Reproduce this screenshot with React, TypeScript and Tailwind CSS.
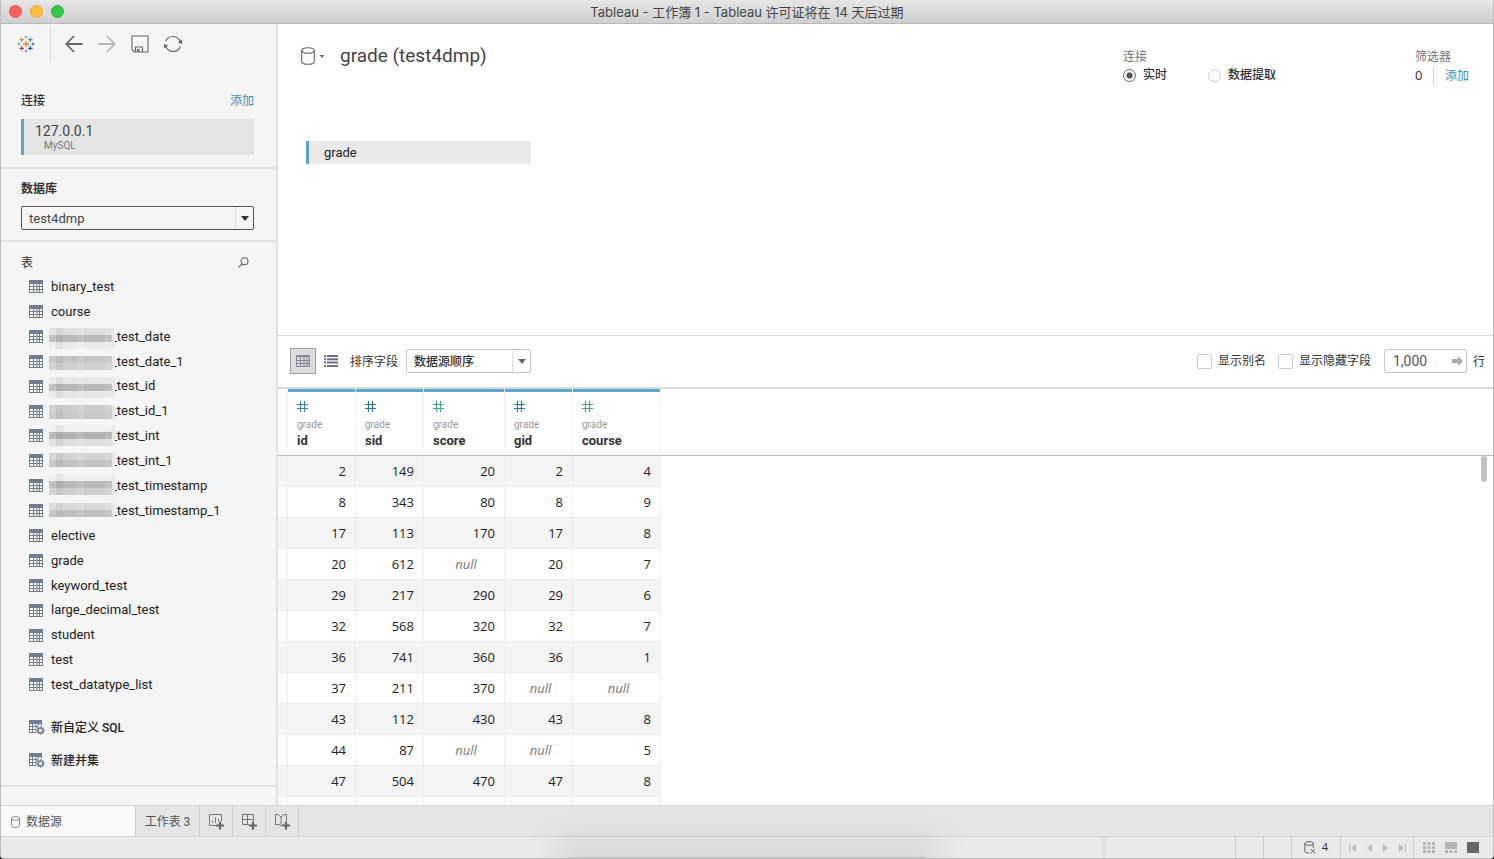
import { useState } from 'react'
import type { ReactNode } from 'react'

type TableEntry = {
  name: string
  // masked schema prefix: first strip offset and the strip shades
  mask?: { top: number; rows: string[] }
}

const tables: TableEntry[] = [
  { name: 'binary_test' },
  { name: 'course' },
  { name: '_test_date', mask: { top: 4, rows: ['#dedede', '#b9b9b9', '#ebebeb'] } },
  { name: '_test_date_1', mask: { top: 7, rows: ['#c3c3c3', '#d0d0d0'] } },
  { name: '_test_id', mask: { top: 3, rows: ['#e6e6e6', '#b8b8b8', '#e6e6e6'] } },
  { name: '_test_id_1', mask: { top: 6, rows: ['#cbcbcb', '#c8c8c8'] } },
  { name: '_test_int', mask: { top: 2, rows: ['#f0f0f0', '#b2b2b2', '#dedede'] } },
  { name: '_test_int_1', mask: { top: 5, rows: ['#d3d3d3', '#c1c1c1'] } },
  { name: '_test_timestamp', mask: { top: 1, rows: ['#f0f0f0', '#b9b9b9', '#cecece'] } },
  { name: '_test_timestamp_1', mask: { top: 5, rows: ['#d9d9d9', '#c0c0c0'] } },
  { name: 'elective' },
  { name: 'grade' },
  { name: 'keyword_test' },
  { name: 'large_decimal_test' },
  { name: 'student' },
  { name: 'test' },
  { name: 'test_datatype_list' },
]

const columns = [
  { name: 'id', color: 'text-[#3f82a6]' },
  { name: 'sid', color: 'text-[#2f769c]' },
  { name: 'score', color: 'text-[#4aa585]' },
  { name: 'gid', color: 'text-[#2f769c]' },
  { name: 'course', color: 'text-[#4aa585]' },
]

const rows: (number | null)[][] = [
  [2, 149, 20, 2, 4],
  [8, 343, 80, 8, 9],
  [17, 113, 170, 17, 8],
  [20, 612, null, 20, 7],
  [29, 217, 290, 29, 6],
  [32, 568, 320, 32, 7],
  [36, 741, 360, 36, 1],
  [37, 211, 370, null, null],
  [43, 112, 430, 43, 8],
  [44, 87, null, null, 5],
  [47, 504, 470, 47, 8],
]

function TableauLogo() {
  const cross = (x: number, y: number, r: number, color: string, w: number) => (
    <path d={`M${x - r} ${y}h${2 * r}M${x} ${y - r}v${2 * r}`} stroke={color} strokeWidth={w} />
  )
  return (
    <svg width="18" height="18" viewBox="0 0 18 18" fill="none">
      {cross(9, 9, 3, '#eb7a2f', 1.3)}
      {cross(4.7, 4.7, 2.3, '#eb912c', 1.2)}
      {cross(13.3, 4.7, 2.3, '#5a8fa3', 1.2)}
      {cross(4.7, 13.3, 2.3, '#d0323f', 1.2)}
      {cross(13.3, 13.3, 2.3, '#2c5696', 1.2)}
      {cross(9, 2, 1.5, '#7b9bb5', 0.9)}
      {cross(9, 16, 1.5, '#7b87ad', 0.9)}
      {cross(2, 9, 1.5, '#5a9bb5', 0.9)}
      {cross(16, 9, 1.5, '#3a4a88', 0.9)}
    </svg>
  )
}

function ArrowIcon({ flip }: { flip?: boolean }) {
  return (
    <svg width="18" height="18" viewBox="0 0 18 18" fill="none" stroke="currentColor" strokeWidth="1.8" className={flip ? 'rotate-180' : ''}>
      <path d="M17.5 9H1.5M9 1L1.3 9 9 17" />
    </svg>
  )
}

function SaveIcon() {
  return (
    <svg width="18" height="18" viewBox="0 0 18 18" fill="none" stroke="currentColor" strokeWidth="1.1">
      <path d="M1 1h16v16H3.5L1 14.5zM4.5 17v-5h7v5" />
      <path d="M6 14h2.5v2.5H6z" fill="currentColor" stroke="none" />
    </svg>
  )
}

function RefreshIcon() {
  return (
    <svg width="18" height="18" viewBox="0 0 18 18" fill="none" stroke="currentColor" strokeWidth="1.1">
      <path d="M1.6 6.5A7.8 7.8 0 0 1 16 6.2M16.4 11.5A7.8 7.8 0 0 1 2 11.8" />
      <path d="M13.8 7.6L18 8.9V4.4zM4.2 10.4L0 9.1v4.5z" fill="currentColor" stroke="none" />
    </svg>
  )
}

function GridIcon() {
  return (
    <svg width="14" height="13" viewBox="0 0 14 13" fill="none" className="shrink-0">
      <path d="M0 0h14v13H0z" fill="#6f7e92" />
      <path d="M1 4h3v2H1zM5 4h2.500v2H5zM8.500 4H10v2H8.500zM11 4h2v2h-2zM1 7h3v2H1zM5 7h2.500v2H5zM8.500 7H10v2H8.500zM11 7h2v2h-2zM1 10h3v2H1zM5 10h2.500v2H5zM8.500 10H10v2H8.500zM11 10h2v2h-2z" fill="#fafafa" />
    </svg>
  )
}

function GridGearIcon() {
  return (
    <svg width="16" height="15" viewBox="0 0 16 15" fill="none" className="shrink-0">
      <path d="M0 0h13v6H9v7H0z" fill="#6f7e92" />
      <path d="M1 4h2v2H1zM4 4h2.500v2H4zM7.500 4H9v2H7.500zM10 4h2v2h-2zM1 7h2v2H1zM4 7h2.500v2H4zM1 10h2v2H1zM4 10h2.500v2H4z" fill="#fafafa" />
      <circle cx="11.500" cy="10.500" r="4.500" fill="#f5f5f5" />
      <circle cx="11.500" cy="10.500" r="2.500" stroke="#6f7e92" strokeWidth="1.600" />
      <path d="M11.500 6.300v1.500M11.500 13.200v1.500M7.300 10.500h1.500M14.200 10.500h1.500M8.500 7.500l1 1M13.500 12.500l1 1M14.500 7.500l-1 1M9.500 12.500l-1 1" stroke="#6f7e92" strokeWidth="1.400" />
    </svg>
  )
}

function HashIcon() {
  return (
    <svg width="11" height="11" viewBox="0 0 11 11" fill="none" stroke="currentColor" strokeWidth="1.2">
      <path d="M3.500 0v11M7.500 0v11M0 3.500h11M0 7.500h11" />
    </svg>
  )
}

function CylinderIcon({ className }: { className: string }) {
  return (
    <svg viewBox="0 0 14 18" fill="none" stroke="currentColor" strokeWidth="1.1" className={className}>
      <ellipse cx="7" cy="3.500" rx="6.300" ry="2.800" />
      <path d="M.7 3.500v11c0 1.600 2.800 2.800 6.300 2.800s6.300-1.200 6.300-2.800v-11" />
    </svg>
  )
}

function Mask({ top, rows }: { top: number; rows: string[] }) {
  return (
    <svg width="66" height="25" viewBox="0 0 66 25" shapeRendering="crispEdges" aria-hidden="true" className="relative shrink-0">
      {rows.map((fill, r) => (
        <g key={r}>
          <rect y={top + r * 7} width="63" height="7" fill={fill} />
          <rect x="63" y={top + r * 7} width="3" height="7" fill="#e9e9e9" />
          {[0, 1, 4, 8].map((c) => (
            <rect
              key={c}
              x={c * 7}
              y={top + r * 7}
              width="7"
              height="7"
              fill={c === 1 ? '#000' : '#fff'}
              opacity={c === 1 ? 0.04 : 0.12}
            />
          ))}
        </g>
      ))}
    </svg>
  )
}

function Caret({ className }: { className: string }) {
  return (
    <svg viewBox="0 0 8 5" fill="currentColor" className={className}>
      <path d="M0 0h8L4 5z" />
    </svg>
  )
}

function IconButton({ label, children, className = 'text-[#666]' }: { label: string; children: ReactNode; className?: string }) {
  return (
    <button type="button" aria-label={label} className={`flex items-center justify-center ${className}`}>
      {children}
    </button>
  )
}

function TitleBar() {
  return (
    <header className="grid h-6 shrink-0 grid-cols-[1fr_auto_1fr] items-center border-b border-[#b8b8b8] bg-linear-to-b from-[#e6e6e6] to-[#cfcfcf]">
      <div className="flex gap-2 pl-2">
        <button type="button" aria-label="关闭" className="size-[13px] rounded-full border border-[#ee544e] bg-[#fc605c]" />
        <button type="button" aria-label="最小化" className="size-[13px] rounded-full border border-[#e5a935] bg-[#fdbc40]" />
        <button type="button" aria-label="缩放" className="size-[13px] rounded-full border border-[#2bb13c] bg-[#34c84a]" />
      </div>
      <h1 className="pt-px font-[Inter,'Noto_Sans_CJK_SC',sans-serif] text-[13px] leading-5 text-[#444]">
        Tableau - 工作簿 1 - Tableau 许可证将在 14 天后过期
      </h1>
    </header>
  )
}

function Sidebar() {
  return (
    <aside className="flex w-[277px] shrink-0 flex-col overflow-hidden border-r-2 border-[#e0e0e0] bg-[#f5f5f5]">
      <div className="flex h-10 shrink-0 items-center pl-4">
        <TableauLogo />
        <span className="mr-[14px] ml-[15px] h-9 w-px bg-[#d9d9d9]" />
        <div className="flex gap-[15px]">
          <IconButton label="后退"><ArrowIcon /></IconButton>
          <IconButton label="前进" className="text-[#b5b5b5]"><ArrowIcon flip /></IconButton>
          <IconButton label="保存"><SaveIcon /></IconButton>
          <IconButton label="刷新"><RefreshIcon /></IconButton>
        </div>
      </div>

      <section className="border-b-2 border-[#e1e1e1] px-5 pt-[27px] pb-3">
        <div className="flex h-5 items-center justify-between text-xs">
          <h2 className="font-medium text-[#333]">连接</h2>
          <a href="#add" className="mr-[2px] text-[#3d8fb1]">添加</a>
        </div>
        <div className="mt-2 mr-[2px] flex h-9 flex-col border-l-[3px] border-[#5ea6c9] bg-[#e5e5e5] pt-[3px] pl-[11px]">
          <span className="text-sm leading-[18px] text-[#444]">127.0.0.1</span>
          <span className="pl-[9px] text-[10px] leading-3 text-[#777]">MySQL</span>
        </div>
      </section>

      <section className="border-b-2 border-[#e1e1e1] px-5 pt-[10px] pb-[10px]">
        <label htmlFor="database" className="block text-xs leading-5 font-bold text-[#333]">数据库</label>
        <div className="relative mt-[7px] mr-[2px]">
          <select id="database" className="h-6 w-full appearance-none rounded-xs border border-[#555] bg-[#f5f5f5] pt-px pl-[7px] text-[13px] text-[#444]">
            <option>test4dmp</option>
          </select>
          <span className="pointer-events-none absolute inset-y-px right-px flex w-[18px] items-center justify-center border-l border-[#ddd] text-[#333]">
            <Caret className="h-[5px] w-2" />
          </span>
        </div>
      </section>

      <section className="border-b-2 border-[#e1e1e1] pt-[10px] pb-2">
        <div className="flex h-5 items-center justify-between pr-[27px] pl-5">
          <h2 className="pt-px text-xs text-[#333]">表</h2>
          <IconButton label="搜索">
            <svg width="11" height="11" viewBox="0 0 11 11" fill="none" stroke="currentColor" strokeWidth="1.1">
              <circle cx="6.500" cy="4.300" r="3.500" />
              <path d="M4 7L.5 10.500" />
            </svg>
          </IconButton>
        </div>
        <ul className="mt-[2px] grid h-[423px] auto-rows-fr">
          {tables.map((t) => (
            <li key={t.name} className="flex min-h-0 items-center pl-7 text-[13px] text-[#222]">
              <GridIcon />
              {t.mask ? (
                <span className="ml-[6px] flex items-center">
                  <Mask {...t.mask} />
                  <span className="-ml-1">{t.name}</span>
                </span>
              ) : (
                <span className="ml-2">{t.name}</span>
              )}
            </li>
          ))}
        </ul>
        <div className="mt-[14px] flex flex-col pl-7 text-xs font-medium text-[#222]">
          <button type="button" className="flex h-[33px] items-center gap-[6px]">
            <GridGearIcon />新自定义 SQL
          </button>
          <button type="button" className="flex h-[33px] items-center gap-[6px]">
            <GridGearIcon />新建并集
          </button>
        </div>
      </section>
    </aside>
  )
}

function Canvas() {
  const [mode, setMode] = useState('live')

  return (
    <section className="h-[312px] shrink-0 border-b border-[#d9d9d9]">
      <div className="flex h-[62px] items-start justify-between pt-[18px] pr-6 pl-[23px]">
        <div className="flex items-center text-[#555]">
          <IconButton label="数据源">
            <CylinderIcon className="h-[18px] w-[14px]" />
            <Caret className="ml-1 h-[3px] w-[6px]" />
          </IconButton>
          <h2 className="ml-[15px] text-[19px] leading-7 text-[#444]">grade (test4dmp)</h2>
        </div>
        <div className="flex pt-[6px] text-xs text-[#333]">
          <fieldset className="mr-[139px]">
            <legend className="float-left w-full leading-[18px] text-[#777]">连接</legend>
            <div className="clear-both flex gap-[41px]">
              {[
                { id: 'live', label: '实时' },
                { id: 'extract', label: '数据提取' },
              ].map((o) => (
                <label key={o.id} className="flex items-center gap-[7px] leading-[18px] font-medium">
                  <input
                    type="radio"
                    name="mode"
                    checked={mode === o.id}
                    onChange={() => setMode(o.id)}
                    className="size-[13px] appearance-none rounded-full border border-[#ccc] bg-white checked:border-[#666] checked:bg-[radial-gradient(#555_35%,#fff_45%)]"
                  />
                  {o.label}
                </label>
              ))}
            </div>
          </fieldset>
          <div>
            <h3 className="leading-[18px] text-[#777]">筛选器</h3>
            <div className="flex h-5 items-center">
              <span className="w-[18px] font-['Open_Sans',sans-serif] text-[13px]">0</span>
              <span className="mr-[11px] h-[18px] w-px bg-[#d4d4d4]" />
              <a href="#filter" className="text-[#3d8fb1]">添加</a>
            </div>
          </div>
        </div>
      </div>
      <div className="mt-[55px] ml-7 flex h-[23px] w-[225px] items-center border-l-[3px] border-[#5ea6c9] bg-[#eaeaea] pt-px pl-[15px] text-[13px] text-[#222]">
        grade
      </div>
    </section>
  )
}

function GridToolbar() {
  return (
    <div className="flex h-[53px] shrink-0 items-center border-b-2 border-[#dadada] px-2 pb-px text-xs text-[#333]">
      <button type="button" aria-label="网格" className="ml-1 flex size-[26px] items-center justify-center border border-[#a0a0a0] bg-[#dcdcdc]">
        <svg width="14" height="12" viewBox="0 0 14 12" fill="none" stroke="#7c879b">
          <path d="M.5.5h13v11H.5zM0 1.500h14M0 5.500h14M0 8.500h14M4.500 1v11M8 1v11M11 1v11" />
        </svg>
      </button>
      <button type="button" aria-label="列表" className="ml-2 flex items-center">
        <svg width="14" height="12" viewBox="0 0 14 12" fill="#66738a">
          <path d="M0 0h2v2H0zM3 0h11v2H3zM0 3.300h2v2H0zM3 3.300h11v2H3zM0 6.600h2v2H0zM3 6.600h11v2H3zM0 10h2v2H0zM3 10h11v2H3z" />
        </svg>
      </button>
      <label htmlFor="sort" className="ml-3 pt-px">排序字段</label>
      <div className="relative ml-2">
        <select id="sort" className="h-6 w-[125px] appearance-none rounded-xs border border-[#c8c8c8] bg-white pt-px pl-[7px] font-medium">
          <option>数据源顺序</option>
        </select>
        <span className="pointer-events-none absolute inset-y-px right-px flex w-[18px] items-center justify-center border-l border-[#ddd] text-[#666]">
          <Caret className="h-[5px] w-2" />
        </span>
      </div>
      <div className="ml-auto flex items-center">
        <label className="mr-3 flex items-center gap-[6px]">
          <input type="checkbox" className="size-[15px] appearance-none rounded-xs border border-[#ccc] bg-white" />
          显示别名
        </label>
        <label className="mr-[13px] flex items-center gap-[6px]">
          <input type="checkbox" className="size-[15px] appearance-none rounded-xs border border-[#ccc] bg-white" />
          显示隐藏字段
        </label>
        <div className="relative mr-[6px]">
          <input
            id="limit"
            type="text"
            defaultValue="1,000"
            className="block h-6 w-[83px] rounded-xs border border-[#c8c8c8] pl-2 text-sm text-[#555]"
          />
          <svg width="11" height="10" viewBox="0 0 11 10" fill="#aaa" className="absolute top-[7px] right-1">
            <path d="M0 3h6V0l5 5-5 5V7H0z" />
          </svg>
        </div>
        <label htmlFor="limit" className="pt-px">行</label>
      </div>
    </div>
  )
}

function DataGrid() {
  return (
    <div className="relative min-h-0 flex-1 overflow-hidden">
      <table className="w-full table-fixed border-separate border-spacing-0">
        <colgroup>
          <col className="w-[10px]" />
          <col className="w-[68px]" />
          <col className="w-[68px]" />
          <col className="w-[81px]" />
          <col className="w-[68px]" />
          <col className="w-[88px]" />
          <col />
        </colgroup>
        <thead>
          <tr>
            <td className="border-r border-b border-r-[#eee] border-b-[#bbb]" />
            {columns.map((c) => (
              <th key={c.name} scope="col" className="h-[67px] border-r border-b border-r-[#eee] border-b-[#bbb] p-0 text-left align-top font-normal">
                <div className="h-[3px] bg-[#5ea6c9]" />
                <div className={`px-[9px] pt-[9px] ${c.color}`}>
                  <HashIcon />
                </div>
                <div className="px-[9px] pt-[6px] text-[10px] leading-[14px] text-[#999]">grade</div>
                <div className="px-[9px] text-[13px] leading-[18px] font-bold text-[#333]">{c.name}</div>
              </th>
            ))}
            <td className="border-b border-b-[#bbb]" />
          </tr>
        </thead>
        <tbody className="font-['Open_Sans',sans-serif] text-[13px] text-[#222]">
          {rows.map((row, i) => (
            <tr key={i} className="group">
              <td className="h-[31px] border-r border-b border-[#eee] group-odd:bg-[#f4f4f4]" />
              {row.map((v, j) => (
                <td
                  key={j}
                  className={`border-r border-b border-[#eee] pt-[2px] pb-0 group-odd:bg-[#f4f4f4] ${
                    v === null ? 'pr-1 pl-2 text-center text-[#777] italic' : 'px-[9px] text-right'
                  }`}
                >
                  {v === null ? 'null' : v}
                </td>
              ))}
              <td />
            </tr>
          ))}
          <tr>
            <td className="h-[31px] border-r border-[#eee]" />
            {columns.map((c) => (
              <td key={c.name} className="border-r border-[#eee]" />
            ))}
            <td />
          </tr>
        </tbody>
      </table>
      <div className="absolute top-[67px] right-[6px] h-[26px] w-[6px] rounded-full bg-[#c1c1c1]" />
    </div>
  )
}

function Plus() {
  return <path d="M12 8.500v8M8 12.500h8" stroke="#666" strokeWidth="2.200" />
}

function SheetTabs() {
  return (
    <nav className="flex h-[31px] shrink-0 items-stretch border-t border-[#d4d4d4] bg-[#e5e5e5] text-xs text-[#555]">
      <button type="button" className="flex w-[135px] items-center gap-[6px] border-r border-[#cfcfcf] bg-[#fafafa] pt-px pl-[10px]">
        <CylinderIcon className="h-3 w-[9px]" />
        数据源
      </button>
      <button type="button" className="w-16 border-r border-[#cfcfcf] pt-px">工作表 3</button>
      <button type="button" aria-label="新建工作表" className="flex w-[33px] items-center justify-center border-r border-[#cfcfcf]">
        <svg width="17" height="17" viewBox="0 0 17 17" fill="none" stroke="#777">
          <path d="M8 12.500H1.500v-11h12V8M4.500 10V7.500M7.500 10V4.500M10.500 8V5.500" />
          <Plus />
        </svg>
      </button>
      <button type="button" aria-label="新建仪表板" className="flex w-[33px] items-center justify-center border-r border-[#cfcfcf]">
        <svg width="17" height="17" viewBox="0 0 17 17" fill="none" stroke="#777">
          <path d="M8 11.500H1.500v-10h11V8M6.500 1.500v10M1.500 6.500h11" />
          <Plus />
        </svg>
      </button>
      <button type="button" aria-label="新建故事" className="flex w-[33px] items-center justify-center border-r border-[#cfcfcf]">
        <svg width="17" height="17" viewBox="0 0 17 17" fill="none" stroke="#777">
          <path d="M7 13L5 11.500H1.500v-10H4L7 4l3-2.500h2.500V8M7 4v9" />
          <Plus />
        </svg>
      </button>
    </nav>
  )
}

function StatusBar() {
  return (
    <footer className="flex h-[22px] shrink-0 items-stretch justify-end border-t border-[#d4d4d4] bg-[#eaeaea] text-[#333]">
      <div className="w-[132px] border-l-2 border-[#d8d8d8]" />
      <div className="w-7 border-l border-[#ccc]" />
      <div className="w-7 border-l border-[#ccc]" />
      <div className="flex w-[49px] items-center justify-center gap-[6px] border-l border-[#ccc] text-[11px]">
        <svg width="12" height="13" viewBox="0 0 12 13" fill="none" stroke="#666">
          <ellipse cx="5" cy="2.500" rx="4.200" ry="1.900" />
          <path d="M.8 2.500v7.500c0 1.100 1.700 2 4.200 2M9.200 2.500V7M6.500 8l4.500 4.500M11 8l-4.500 4.500" />
        </svg>
        <span className="font-['Open_Sans',sans-serif] font-medium">4</span>
      </div>
      <div className="flex w-[73px] items-center justify-center gap-[11px] border-l border-[#ccc]">
        <IconButton label="第一页" className="text-[#bbb]">
          <svg width="7" height="8" viewBox="0 0 7 8" fill="currentColor"><path d="M0 0h1v8H0zM7 0v8L2 4z" /></svg>
        </IconButton>
        <IconButton label="上一页" className="text-[#bbb]">
          <svg width="5" height="8" viewBox="0 0 5 8" fill="currentColor"><path d="M5 0v8L0 4z" /></svg>
        </IconButton>
        <IconButton label="下一页" className="text-[#bbb]">
          <svg width="5" height="8" viewBox="0 0 5 8" fill="currentColor"><path d="M0 0v8l5-4z" /></svg>
        </IconButton>
        <IconButton label="最后一页" className="text-[#bbb]">
          <svg width="7" height="8" viewBox="0 0 7 8" fill="currentColor"><path d="M0 0v8l5-4zM6 0h1v8H6z" /></svg>
        </IconButton>
      </div>
      <div className="flex w-[80px] items-center gap-[10px] border-l border-[#ccc] pl-[9px]">
        <IconButton label="缩略图" className="text-[#b5b5b5]">
          <svg width="12" height="11" viewBox="0 0 12 11" fill="currentColor">
            <path d="M0 0h3v3H0zM4.500 0h3v3h-3zM9 0h3v3H9zM0 4h3v3H0zM4.500 4h3v3h-3zM9 4h3v3H9zM0 8h3v3H0zM4.500 8h3v3h-3zM9 8h3v3H9z" />
          </svg>
        </IconButton>
        <IconButton label="胶片" className="text-[#b5b5b5]">
          <svg width="12" height="11" viewBox="0 0 12 11" fill="currentColor">
            <path d="M0 0h12v7H0zM0 8h3v3H0zM4.500 8h3v3h-3zM9 8h3v3H9z" />
          </svg>
        </IconButton>
        <IconButton label="单页">
          <svg width="12" height="11" viewBox="0 0 12 11" fill="currentColor"><path d="M0 0h12v11H0z" /></svg>
        </IconButton>
      </div>
    </footer>
  )
}

export default function App() {
  return (
    <div className="h-screen bg-black font-[Roboto,'Noto_Sans_CJK_SC',sans-serif]">
      <div className="relative flex h-full flex-col overflow-hidden rounded-b-[4px] border border-t-0 border-[#bdbdbd] bg-white">
        <TitleBar />
        <div className="flex min-h-0 flex-1">
          <Sidebar />
          <main className="flex min-w-0 flex-1 flex-col">
            <Canvas />
            <GridToolbar />
            <DataGrid />
          </main>
        </div>
        <SheetTabs />
        <StatusBar />
        {/* soft shade rising from the bottom edge */}
        <div className="pointer-events-none absolute inset-x-0 bottom-0 mx-auto h-px w-[24%] bg-[#c4c4c4] shadow-[0_0_36px_12px_rgba(0,0,0,0.13)]" />
      </div>
    </div>
  )
}
